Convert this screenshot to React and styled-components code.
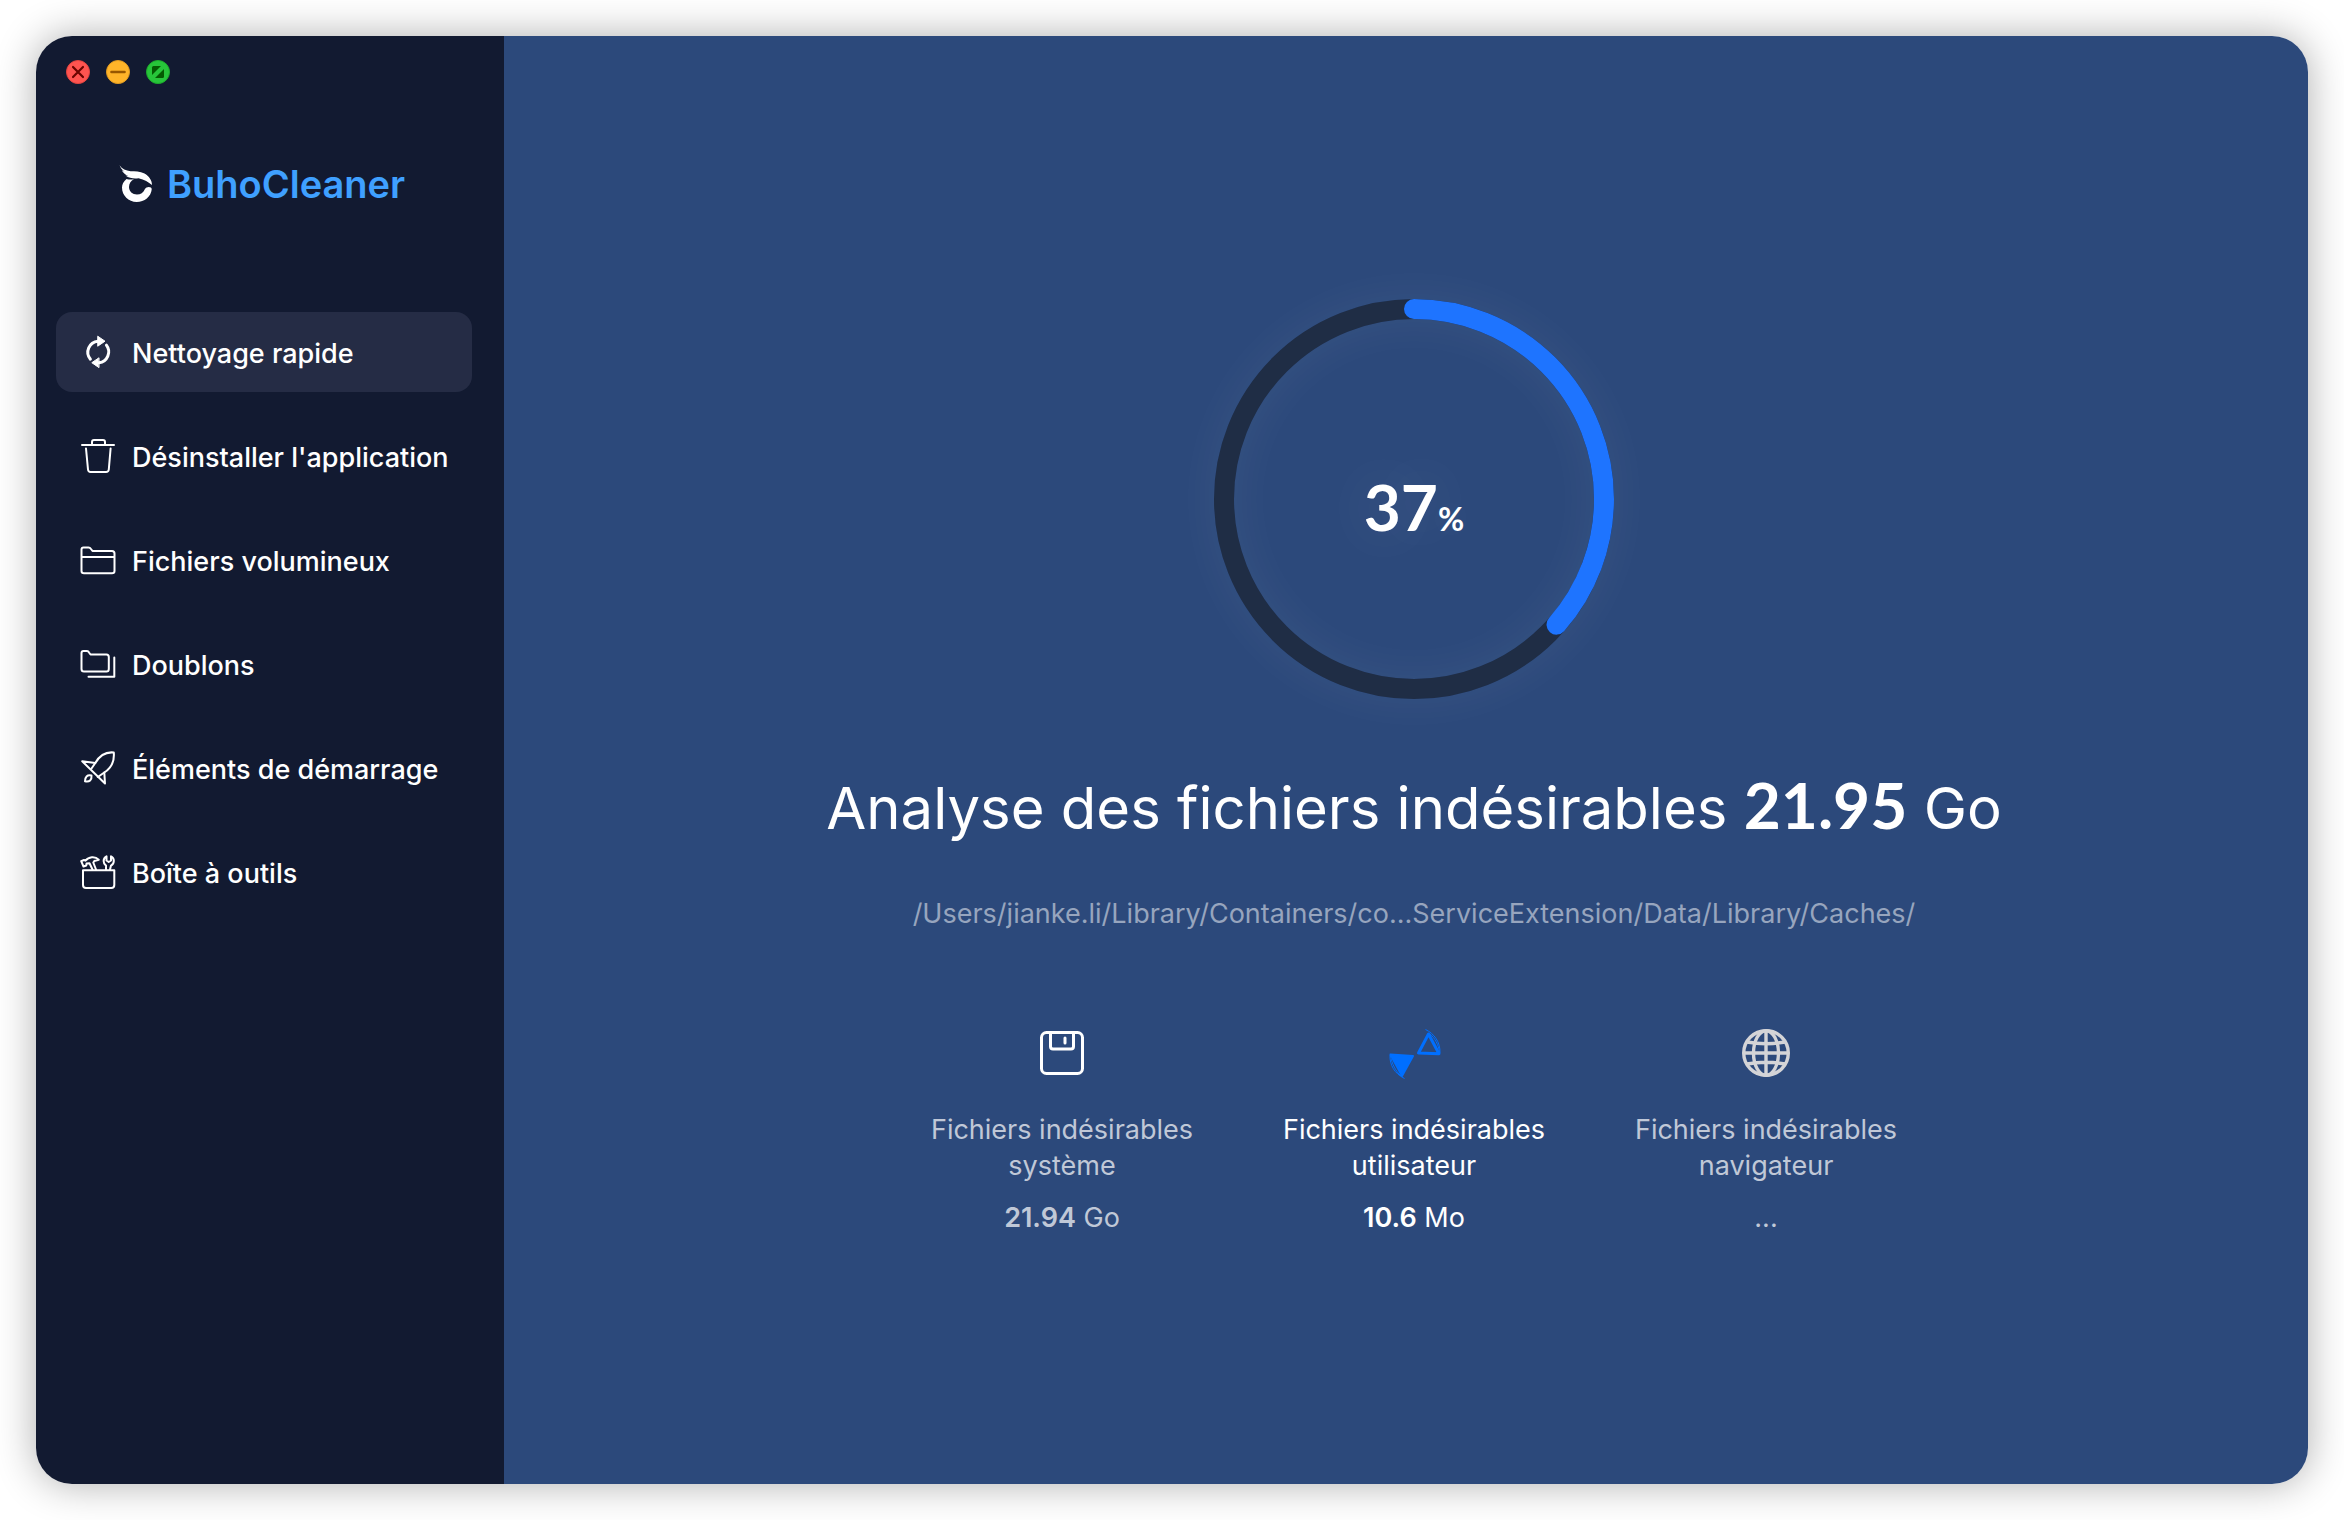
import styled, { createGlobalStyle } from "styled-components";

const GlobalStyle = createGlobalStyle`
  * {
    box-sizing: border-box;
  }

  body {
    margin: 0;
    background: #ffffff;
    font-family: Inter, "Liberation Sans", sans-serif;
    -webkit-font-smoothing: antialiased;
  }
`;

const Desktop = styled.div`
  display: flex;
  min-height: 100vh;
  padding: 36px;
`;

const Window = styled.div`
  flex: 1;
  display: flex;
  border-radius: 36px;
  overflow: hidden;
  box-shadow: 0 0 40px rgba(0, 0, 0, 0.32);
`;

const Sidebar = styled.aside`
  width: 468px;
  flex-shrink: 0;
  background: #121a31;
`;

const WindowControls = styled.div`
  display: flex;
  gap: 16px;
  padding: 24px 30px 0;
`;

const ControlButton = styled.button`
  width: 24px;
  height: 24px;
  padding: 0;
  border: 1px solid ${(props) => props.$edge};
  border-radius: 50%;
  background: ${(props) => props.$color};

  svg {
    display: block;
    width: 22px;
    height: 22px;
  }
`;

const Brand = styled.div`
  display: flex;
  align-items: center;
  gap: 14px;
  margin: 76px 0 104px;
  padding-left: 83px;
  color: #3fa0ff;
  font-size: 38px;
  font-weight: 600;
  line-height: 48px;
`;

const Nav = styled.nav`
  display: flex;
  flex-direction: column;
  gap: 24px;
  padding: 0 32px 0 20px;
`;

const NavItem = styled.button`
  display: flex;
  align-items: center;
  gap: 16px;
  height: 80px;
  padding: 0 24px;
  border: none;
  border-radius: 16px;
  background: ${(props) => (props.$active ? "#252c45" : "transparent")};
  color: #ffffff;
  font-family: inherit;
  font-size: 27px;
  font-weight: 500;
  line-height: 36px;
  white-space: nowrap;

  svg {
    flex-shrink: 0;
  }
`;

const NavLabel = styled.span`
  padding-top: 4px;
`;

const Main = styled.main`
  flex: 1;
  display: flex;
  flex-direction: column;
  align-items: center;
  padding: 263px 0 0 16px;
  background: #2c497b;
  color: #ffffff;
`;

const Ring = styled.div`
  display: grid;
  place-items: center;
  width: 400px;
  height: 400px;
  border-radius: 50%;
  box-shadow: 0 0 50px rgba(255, 255, 255, 0.06);

  > * {
    grid-area: 1 / 1;
  }
`;

const RingTrack = styled.div`
  width: 400px;
  height: 400px;
  border: 20px solid #1f2d45;
  border-radius: 50%;
  box-shadow: inset 0 0 50px rgba(255, 255, 255, 0.06);
`;

const Percent = styled.div`
  padding-top: 28px;
  font-family: Lato, sans-serif;
  font-size: 64px;
  font-weight: 700;
  line-height: 80px;
  text-shadow: 0 0 60px rgba(255, 255, 255, 0.2);

  small {
    font-size: 32px;
  }
`;

const Title = styled.h1`
  margin: 69px 0 0;
  font-size: 58px;
  font-weight: 400;
  line-height: 80px;

  strong {
    font-family: Lato, sans-serif;
    font-size: 64px;
    font-weight: 700;
    line-height: 1;
  }
`;

const CurrentPath = styled.p`
  margin: 48px 0 0;
  color: #97a5be;
  font-size: 27px;
  line-height: 36px;
`;

const Categories = styled.div`
  display: flex;
  margin-top: 93px;
`;

const Category = styled.section`
  display: flex;
  flex-direction: column;
  align-items: center;
  width: 352px;
  color: ${(props) => (props.$active ? "#ffffff" : "#c0c8d7")};
  font-size: 27px;
  line-height: 36px;
  text-align: center;
`;

const CategoryLabel = styled.h2`
  margin: 31px 32px 16px;
  font-size: inherit;
  font-weight: 400;
`;

const CategorySize = styled.p`
  margin: 0;

  strong {
    font-weight: 600;
  }
`;

const LineIcon = ({ children, width = 2 }) => (
  <svg
    width="36"
    height="36"
    viewBox="0 0 36 36"
    fill="none"
    stroke="currentColor"
    strokeWidth={width}
    strokeLinecap="round"
    strokeLinejoin="round"
    aria-hidden="true"
  >
    {children}
  </svg>
);

const RefreshIcon = () => (
  <LineIcon width={3}>
    <path d="M10.4 25.2A11 11 0 0 1 18 7.2" />
    <path d="M26.4 11.2A11 11 0 0 1 19 28.8" />
    <path d="M18 2.4 25 7.2 18 12Z" fill="currentColor" strokeWidth="1" />
    <path d="M18.7 24 11.8 28.7 18.7 33.4Z" fill="currentColor" strokeWidth="1" />
  </LineIcon>
);

const TrashIcon = () => (
  <LineIcon>
    <path d="M2 7H34" />
    <path d="M12 7V4Q12 2 14 2H23Q25 2 25 4V7" />
    <path d="M6 10.5 8 31.5Q8.3 34 10.5 34H26Q28.5 34 28.8 31.5L30.6 10.5" />
  </LineIcon>
);

const FolderIcon = () => (
  <LineIcon>
    <path d="M1.5 7.5Q1.5 5.5 3.5 5.5H8.5Q10 5.5 11 7L12.5 9H32Q34.5 9 34.5 11.5V29Q34.5 31.2 32 31.2H4Q1.5 31.2 1.5 29Z" />
    <path d="M2 15H34" />
  </LineIcon>
);

const DuplicatesIcon = () => (
  <LineIcon>
    <path d="M1.5 7Q1.5 5 3.5 5H7Q8.3 5 9 6.5L10.5 8.5H26.5Q28.8 8.5 28.8 11V23Q28.8 25.5 26.5 25.5H4Q1.5 25.5 1.5 23Z" />
    <path d="M34.3 11.5V30.8H8.5" />
  </LineIcon>
);

const RocketIcon = () => (
  <LineIcon>
    <path d="M11.5 18.5 15.3 13C19 6.5 24.5 1.5 33.8 2.5C34.5 11 31.5 18 24.3 22.5L17.8 27" />
    <path d="M15.3 13 2.2 11.3 25 33.5 24.3 22.5" />
    <path d="M11.5 25.5C7 24.5 5 27 5 31.3C9.5 32.3 12 30 11.5 25.5Z" />
  </LineIcon>
);

const ToolboxIcon = () => (
  <LineIcon>
    <path d="M3 16.3H34.3V31Q34.3 34 31.3 34H6Q3 34 3 31Z" />
    <path d="M12.5 15.5 9.5 9.2 6.5 9.5 6.3 11.5 3.5 12.5 1.2 7.2 4 6 5.5 6.7C8.5 2.8 15 1.8 18.7 5.8L14.3 7 13.3 8.5 16 15.5" />
    <path d="M26 15.5V11.6C23 9.5 22.5 4.5 26.5 2.3V6.5L28.7 8 31 6.5V2.3C35 4.5 34.5 9.5 31 11.6L30 15.5" />
  </LineIcon>
);

const BrandMark = () => (
  <svg width="34" height="38" viewBox="0 0 34 38" fill="#ffffff" aria-hidden="true">
    <path d="M7.5 14C4.5 16.500 3 19.500 3 22.500C3 30.500 9.500 37 17.700 37C25.500 37 32 31.500 32.700 24.500C33 21.500 27.500 21.200 25.800 24.200C24.500 27.500 21.500 29.500 18 29.500C13.500 29.500 10 26.500 10 22C10 18.500 12 15.800 15 14.300C12 14.800 9.500 14.600 7.500 14Z" />
    <path d="M.5 .3C3 4 7 5.800 11.500 6.200C16 6.300 21 6 25.500 8.500C30 11.200 33 15 33 20C29.500 17 25.500 14.500 19.500 13.200C15.500 13.800 10.500 13.500 6.500 10.500L9.500 11.200C6 9.800 4 7.500 2.800 5.300L5.500 6.800C3 4.800 1.500 2.800 .5 .3Z" />
  </svg>
);

const DiskIcon = () => (
  <svg width="56" height="56" viewBox="0 0 56 56" fill="none" stroke="#ffffff" aria-hidden="true">
    <rect x="7.500" y="7.500" width="41" height="41" rx="5" strokeWidth="3" />
    <path d="M16.500 8V21.500Q16.500 24 19 24H37Q39.500 24 39.500 21.500V8" strokeWidth="3" />
    <path d="M31 13V18" strokeWidth="3" strokeLinecap="round" />
  </svg>
);

const UserFilesIcon = () => (
  <svg
    width="56"
    height="56"
    viewBox="0 0 56 56"
    fill="none"
    stroke="#006fff"
    strokeLinejoin="round"
    aria-hidden="true"
  >
    <path d="M42.5 9 32.5 28 53 28.8Z" strokeWidth="3" />
    <path d="M39.500 4.500C48 8.500 54.500 17 54 28" strokeWidth="1" />
    <path d="M43.500 8.500C49 13 52.500 20 53.500 27" strokeWidth="1" />
    <path d="M4.500 29.500 27 31 16 51Z" fill="#006fff" strokeWidth="2" />
    <path d="M4 30C3.500 40 8.500 48.500 18.500 53.500" strokeWidth="1" />
    <path d="M4.500 31C6 39 9.500 46 15 51" strokeWidth="1" />
  </svg>
);

const GlobeIcon = () => (
  <svg width="56" height="56" viewBox="0 0 56 56" fill="none" stroke="#d4d4d7" strokeWidth="3.4" aria-hidden="true">
    <circle cx="28" cy="28" r="22.3" />
    <ellipse cx="28" cy="28" rx="12.5" ry="22.3" />
    <path d="M28 6V50M6 28H50M9 17Q28 20.500 47 17M9 39Q28 35.500 47 39" />
  </svg>
);

const navItems = [
  { label: "Nettoyage rapide", icon: RefreshIcon },
  { label: "Désinstaller l'application", icon: TrashIcon },
  { label: "Fichiers volumineux", icon: FolderIcon },
  { label: "Doublons", icon: DuplicatesIcon },
  { label: "Éléments de démarrage", icon: RocketIcon },
  { label: "Boîte à outils", icon: ToolboxIcon },
];

const categories = [
  { label: "Fichiers indésirables système", icon: DiskIcon, amount: "21.94", unit: "Go" },
  { label: "Fichiers indésirables utilisateur", icon: UserFilesIcon, amount: "10.6", unit: "Mo" },
  { label: "Fichiers indésirables navigateur", icon: GlobeIcon },
];

const App = () => {
  return (
    <Desktop>
      <GlobalStyle />
      <Window>
        <Sidebar>
          <WindowControls>
            <ControlButton aria-label="Fermer" $color="#ff5450" $edge="#e2453f">
              <svg viewBox="0 0 22 22" stroke="#6b0500" strokeWidth="2.2" strokeLinecap="round">
                <path d="M6 6 16 16M16 6 6 16" />
              </svg>
            </ControlButton>
            <ControlButton aria-label="Réduire" $color="#ffb429" $edge="#e09a20">
              <svg viewBox="0 0 22 22" stroke="#985700" strokeWidth="2.6" strokeLinecap="round">
                <path d="M4.5 11H17.5" />
              </svg>
            </ControlButton>
            <ControlButton aria-label="Agrandir" $color="#27c53a" $edge="#1dab2c">
              <svg viewBox="0 0 22 22" fill="#045a02">
                <path d="M5 14V6.5Q5 5 6.5 5H14Z" />
                <path d="M17 8V15.5Q17 17 15.5 17H8Z" />
              </svg>
            </ControlButton>
          </WindowControls>
          <Brand>
            <BrandMark />
            BuhoCleaner
          </Brand>
          <Nav>
            {navItems.map(({ label, icon: Icon }, index) => (
              <NavItem key={label} $active={index === 0}>
                <Icon />
                <NavLabel>{label}</NavLabel>
              </NavItem>
            ))}
          </Nav>
        </Sidebar>
        <Main>
          <Ring>
            <RingTrack />
            <svg width="400" height="400" viewBox="0 0 400 400" fill="none" aria-hidden="true">
              <circle
                cx="200"
                cy="200"
                r="190"
                pathLength="1000"
                stroke="#1e74ff"
                strokeWidth="20"
                strokeLinecap="round"
                strokeDasharray="365 1000"
                transform="rotate(-90 200 200)"
              />
            </svg>
            <Percent>
              37<small>%</small>
            </Percent>
          </Ring>
          <Title>
            Analyse des fichiers indésirables <strong>21.95</strong> Go
          </Title>
          <CurrentPath>/Users/jianke.li/Library/Containers/co...ServiceExtension/Data/Library/Caches/</CurrentPath>
          <Categories>
            {categories.map(({ label, icon: Icon, amount, unit }, index) => (
              <Category key={label} $active={index === 1}>
                <Icon />
                <CategoryLabel>{label}</CategoryLabel>
                <CategorySize>
                  {amount ? (
                    <>
                      <strong>{amount}</strong> {unit}
                    </>
                  ) : (
                    "..."
                  )}
                </CategorySize>
              </Category>
            ))}
          </Categories>
        </Main>
      </Window>
    </Desktop>
  );
};

export default App;
